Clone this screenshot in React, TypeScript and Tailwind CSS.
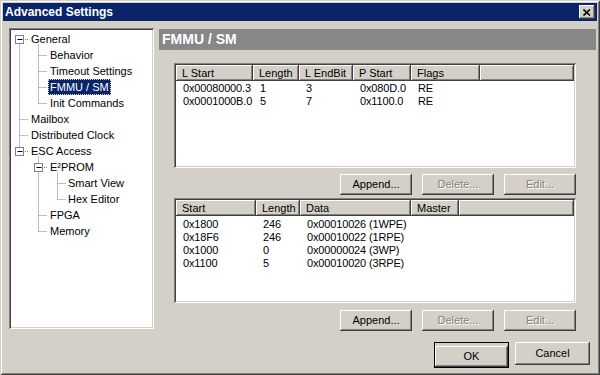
import React from "react";

// classic win bevels
const raised =
  "shadow-[inset_-1px_-1px_#404040,inset_1px_1px_#ffffff,inset_-2px_-2px_#808080,inset_2px_2px_#d4d0c8]";
const sunken =
  "shadow-[inset_1px_1px_#808080,inset_-1px_-1px_#ffffff,inset_2px_2px_#404040,inset_-2px_-2px_#d4d0c8]";

type TreeItem = { label: string; level: number; box?: boolean; selected?: boolean };

const treeItems: TreeItem[] = [
  { label: "General", level: 0, box: true },
  { label: "Behavior", level: 1 },
  { label: "Timeout Settings", level: 1 },
  { label: "FMMU / SM", level: 1, selected: true },
  { label: "Init Commands", level: 1 },
  { label: "Mailbox", level: 0 },
  { label: "Distributed Clock", level: 0 },
  { label: "ESC Access", level: 0, box: true },
  { label: "E²PROM", level: 1, box: true },
  { label: "Smart View", level: 2 },
  { label: "Hex Editor", level: 2 },
  { label: "FPGA", level: 1 },
  { label: "Memory", level: 1 },
];

const levelMargin = ["ml-[18px]", "ml-[37px]", "ml-[55px]"];

const fmmuCols = [
  { title: "L Start", w: "w-[77px]" },
  { title: "Length", w: "w-[46px]" },
  { title: "L EndBit", w: "w-[54px]" },
  { title: "P Start", w: "w-[58px]" },
  { title: "Flags", w: "w-[69px]" },
];

const fmmuRows = [
  ["0x00080000.3", "1", "3", "0x080D.0", "RE"],
  ["0x0001000B.0", "5", "7", "0x1100.0", "RE"],
];

const smCols = [
  { title: "Start", w: "w-[80px]" },
  { title: "Length", w: "w-[44px]" },
  { title: "Data", w: "w-[111px]" },
  { title: "Master", w: "w-[48px]" },
];

const smRows = [
  ["0x1800", "246", "0x00010026 (1WPE)", ""],
  ["0x18F6", "246", "0x00010022 (1RPE)", ""],
  ["0x1000", "0", "0x00000024 (3WP)", ""],
  ["0x1100", "5", "0x00010020 (3RPE)", ""],
];

const TreeLines = () => {
  const cy = (i: number) => 11 + 16 * i + 0.5;
  const dot = { stroke: "#808080", strokeDasharray: "1 1", strokeWidth: 1 };
  const box = (cx: number, i: number) => (
    <g key={"b" + i}>
      <rect x={cx - 4} y={cy(i) - 4} width={8} height={8} fill="#ffffff" stroke="#808080" />
      <line x1={cx - 2} y1={cy(i)} x2={cx + 3} y2={cy(i)} stroke="#000000" />
    </g>
  );
  return (
    <svg className="absolute left-0 top-0" width={145} height={301}>
      {/* root line */}
      <line x1={10.5} y1={cy(0)} x2={10.5} y2={cy(7)} {...dot} />
      {[5, 6].map((i) => (
        <line key={i} x1={10.5} y1={cy(i)} x2={19} y2={cy(i)} {...dot} />
      ))}
      <line x1={14} y1={cy(0)} x2={19} y2={cy(0)} {...dot} />
      <line x1={14} y1={cy(7)} x2={19} y2={cy(7)} {...dot} />
      {/* general children */}
      <line x1={29.5} y1={cy(0) + 5} x2={29.5} y2={cy(4)} {...dot} />
      {[1, 2, 3, 4].map((i) => (
        <line key={i} x1={29.5} y1={cy(i)} x2={38} y2={cy(i)} {...dot} />
      ))}
      {/* esc children */}
      <line x1={29.5} y1={cy(7) + 5} x2={29.5} y2={cy(12)} {...dot} />
      {[11, 12].map((i) => (
        <line key={i} x1={29.5} y1={cy(i)} x2={38} y2={cy(i)} {...dot} />
      ))}
      <line x1={33} y1={cy(8)} x2={38} y2={cy(8)} {...dot} />
      {/* eeprom children */}
      <line x1={48.5} y1={cy(8) + 5} x2={48.5} y2={cy(10)} {...dot} />
      {[9, 10].map((i) => (
        <line key={i} x1={48.5} y1={cy(i)} x2={57} y2={cy(i)} {...dot} />
      ))}
      {box(10.5, 0)}
      {box(10.5, 7)}
      {box(29.5, 8)}
    </svg>
  );
};

const Btn = ({ label, disabled, wide }: { label: string; disabled?: boolean; wide?: boolean }) => (
  <button
    type="button"
    className={`${wide ? "w-[75px] h-[23px]" : "w-[72px] h-[21px]"} bg-[#d4d0c8] ${raised} text-[11px] ${
      disabled ? "text-[#808080] [text-shadow:1px_1px_0_#ffffff]" : "text-black"
    }`}
  >
    {label}
  </button>
);

const ListView = ({
  cols,
  rows,
  top,
}: {
  cols: { title: string; w: string }[];
  rows: string[][];
  top: string;
}) => (
  <div className={`ml-[15px] w-[402px] h-[105px] p-[2px] bg-white ${sunken}`}>
    <div className="flex h-[16px] bg-[#d4d0c8]">
      {cols.map((c) => (
        <div key={c.title} className={`${c.w} ${raised} pl-[6px] leading-[16px] text-[11px]`}>
          {c.title}
        </div>
      ))}
      <div className={`flex-1 ${raised}`} />
    </div>
    <div className={top}>
      {rows.map((r, i) => (
        <div key={i} className="flex h-[13px] leading-[13px] text-[11px] tracking-[-0.15px] text-black">
          {r.map((v, j) => (
            <div key={j} className={`${cols[j].w} pl-[7px] whitespace-nowrap`}>
              {v}
            </div>
          ))}
        </div>
      ))}
    </div>
  </div>
);

const App = () => {
  return (
    <div
      className={`w-[600px] h-[375px] bg-[#d4d0c8] p-[3px] flex flex-col font-['Liberation_Sans',Arial,sans-serif] shadow-[inset_1px_1px_#d4d0c8,inset_-1px_-1px_#404040,inset_2px_2px_#ffffff,inset_-2px_-2px_#808080]`}
    >
      {/* title bar */}
      <div className="h-[18px] bg-[#0a246a] flex items-center justify-between">
        <span className="pl-[2px] text-white font-bold text-[12px] leading-[18px]">Advanced Settings</span>
        <div className={`mr-[2px] w-[16px] h-[14px] bg-[#d4d0c8] ${raised} flex items-center justify-center`}>
          <svg width="8" height="7" viewBox="0 0 8 7">
            <path d="M0.5 0.5L7 6.5M7 0.5L0.5 6.5" stroke="#000000" strokeWidth="1.6" fill="none" />
          </svg>
        </div>
      </div>

      <div className="flex items-start mt-[7px]">
        {/* tree */}
        <div className={`relative ml-[6px] w-[145px] h-[301px] bg-white p-[2px] ${sunken}`}>
          <TreeLines />
          <div className="relative pt-[1px]">
            {treeItems.map((t) => (
              <div key={t.label} className="h-[16px] flex">
                <span
                  className={`${levelMargin[t.level]} px-[2px] h-[16px] leading-[16px] text-[11px] whitespace-nowrap ${
                    t.selected
                      ? "bg-[#0a246a] text-white outline outline-1 outline-dotted outline-[#e0e0a0] -outline-offset-1"
                      : "text-black"
                  }`}
                >
                  {t.label}
                </span>
              </div>
            ))}
          </div>
        </div>

        {/* right side */}
        <div className="ml-[5px] mt-[1px] w-[437px] flex flex-col">
          <div className="h-[21px] bg-[#878787] pl-[3px] text-white font-bold text-[14px] leading-[21px]">
            FMMU / SM
          </div>
          <div className="mt-[13px]">
            <ListView cols={fmmuCols} rows={fmmuRows} top="pt-[1px]" />
          </div>
          <div className="mt-[6px] w-[417px] flex justify-end gap-[10px]">
            <Btn label="Append..." />
            <Btn label="Delete..." disabled />
            <Btn label="Edit..." disabled />
          </div>
          <div className="mt-[3px]">
            <ListView cols={smCols} rows={smRows} top="pt-[2px]" />
          </div>
          <div className="mt-[7px] w-[417px] flex justify-end gap-[10px]">
            <Btn label="Append..." />
            <Btn label="Delete..." disabled />
            <Btn label="Edit..." disabled />
          </div>
        </div>
      </div>

      {/* footer */}
      <div className="mt-[11px] flex justify-end gap-[6px] pr-[7px]">
        <div className="border border-black">
          <button
            type="button"
            className={`w-[73px] h-[21px] bg-[#d4d0c8] ${raised} text-[11px] text-black`}
          >
            OK
          </button>
        </div>
        <Btn label="Cancel" wide />
      </div>
    </div>
  );
};

export default App;
